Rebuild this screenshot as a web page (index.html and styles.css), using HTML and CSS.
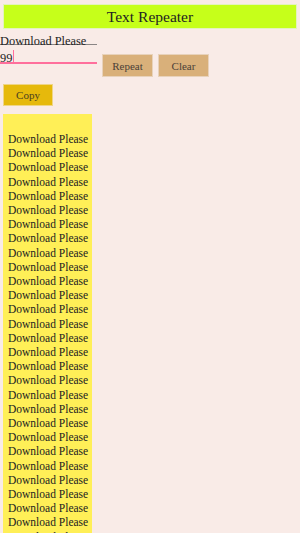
FILE: index.html
```html
<!DOCTYPE html>
<html lang="en">
<head>
    <meta charset="UTF-8">
    <meta name="viewport" content="width=device-width, initial-scale=1.0">
    <title>Text Repeater</title>
    <link rel="stylesheet" href="styles.css">
</head>
<body>
    <header class="title-bar">
        <h1>Text Repeater</h1>
    </header>

    <div class="form">
        <input type="text" class="field" id="text" value="Download Please">
        <div class="row">
            <span class="field-wrap">
                <input type="number" class="field active" id="count" value="99">
            </span>
            <button class="btn" onclick="repeat()">Repeat</button>
            <button class="btn" onclick="clearOut()">Clear</button>
        </div>
        <button class="btn copy" onclick="copyOut()">Copy</button>
    </div>

    <div class="output" id="output"></div>

    <script>
        function repeat() {
            const text = document.getElementById('text').value;
            const n = parseInt(document.getElementById('count').value) || 0;
            const out = document.getElementById('output');
            out.innerHTML = '';
            for (let i = 0; i < n; i++) {
                const line = document.createElement('div');
                line.textContent = text;
                out.appendChild(line);
            }
        }

        function clearOut() {
            document.getElementById('output').innerHTML = '';
        }

        function copyOut() {
            const text = document.getElementById('output').innerText;
            if (navigator.clipboard) navigator.clipboard.writeText(text);
        }

        repeat();
    </script>
</body>
</html>
```

FILE: styles.css
```css
body, html {
    margin: 0;
    padding: 0;
    font-family: "Liberation Serif", "DejaVu Serif", serif;
    background-color: #f9ebe7;
    color: #222;
}

.title-bar {
    margin: 4px 3px 0 3px;
    background-color: #c6ff1a;
    border: 1px solid #e3f3bd;
}

.title-bar h1 {
    margin: 0;
    font-size: 15.5px;
    font-weight: normal;
    line-height: 23px;
    text-align: center;
    color: #222;
}

.form {
    padding-top: 5px;
}

.field {
    display: block;
    width: 97px;
    height: 14px;
    box-sizing: border-box;
    padding: 0;
    border: none;
    background: linear-gradient(#8a8585, #8a8585) 0 10px / 100% 1px no-repeat;
    font-family: inherit;
    font-size: 12.4px;
    color: #222;
    outline: none;
    -moz-appearance: textfield;
}

.field::-webkit-inner-spin-button {
    -webkit-appearance: none;
}

.field-wrap {
    position: relative;
    display: block;
}

/* text caret of the focused field */
.field-wrap::after {
    content: "";
    position: absolute;
    left: 13px;
    top: -1px;
    width: 1px;
    height: 14px;
    background-color: #ff6f9c;
}

.field.active {
    background: linear-gradient(#ff6f9c, #ff6f9c) 0 11px / 100% 2px no-repeat;
}

.row {
    display: flex;
    align-items: flex-start;
    gap: 5px;
    margin-top: 3px;
}

.btn {
    font-family: inherit;
    font-size: 11px;
    color: #4a4038;
    background-color: #d9b07a;
    border: 1px solid #e8d2bb;
    height: 23px;
    width: 51px;
    padding: 0;
    cursor: pointer;
}

.row .btn {
    margin-top: 3px;
}

.copy {
    display: block;
    background-color: #e6b90c;
    border-color: #efd586;
    color: #4a4020;
    margin: 7px 0 0 3px;
    width: 50px;
    height: 22px;
}

.output {
    margin: 8px 0 0 3px;
    width: 89px;
    padding: 18px 0 0 5px;
    box-sizing: border-box;
    background-color: #ffef57;
    font-size: 11.5px;
    line-height: 14.2px;
    color: #222;
    white-space: nowrap;
    overflow: hidden;
}
```
